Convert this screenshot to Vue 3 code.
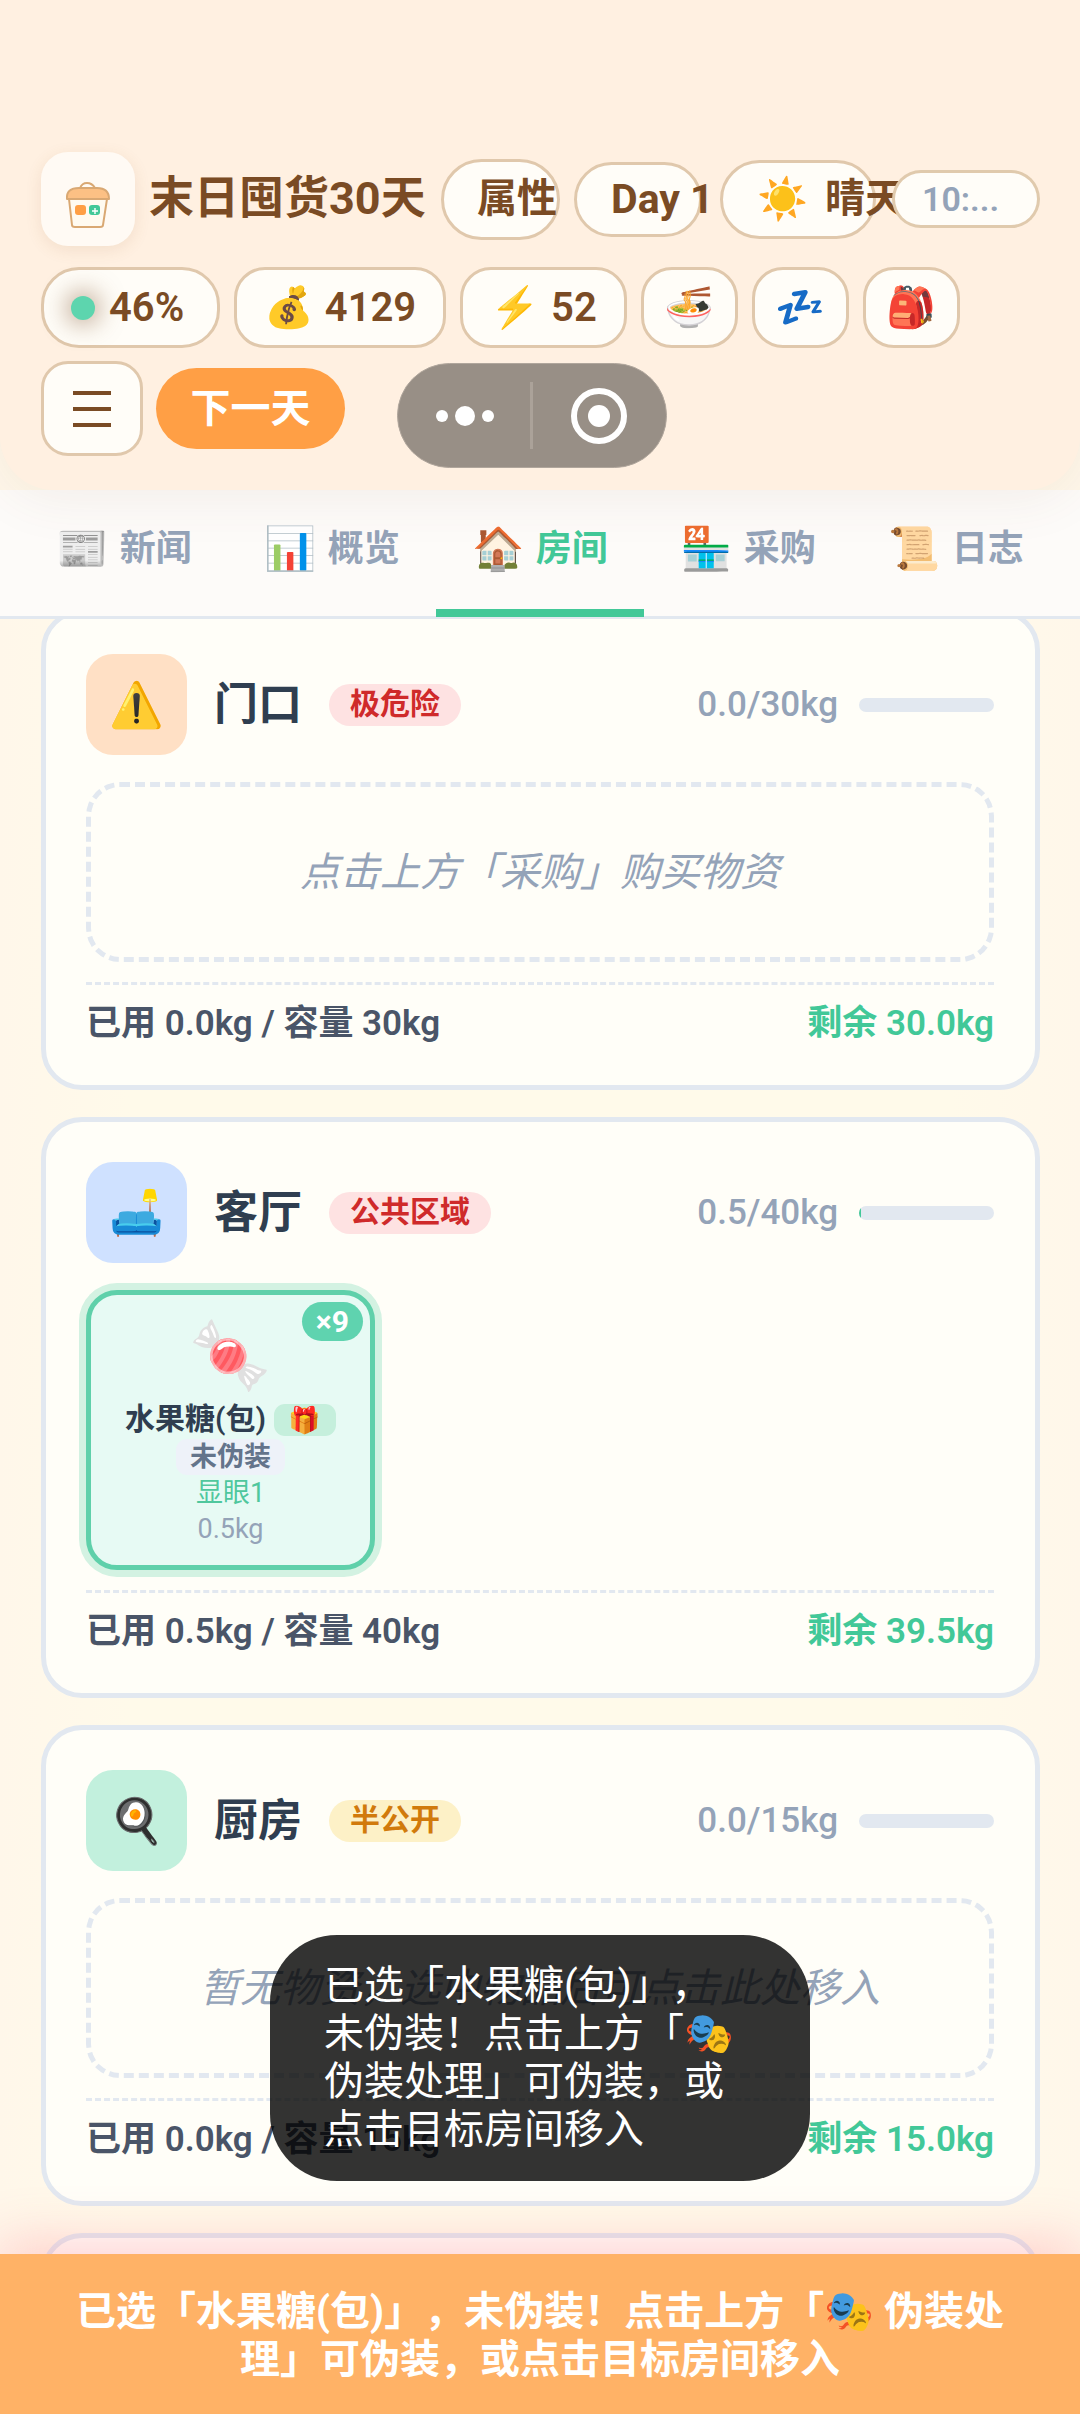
<script setup>
const stats = [
  { icon: '💰', value: '4129' },
  { icon: '⚡', value: '52' },
]
const actions = [
  { icon: '🍜', name: '吃饭' },
  { icon: '💤', name: '睡觉' },
  { icon: '🎒', name: '背包' },
]
const tabs = [
  { icon: '📰', label: '新闻' },
  { icon: '📊', label: '概览' },
  { icon: '🏠', label: '房间', active: true },
  { icon: '🏪', label: '采购' },
  { icon: '📜', label: '日志' },
]
const rooms = [
  { name: '门口', icon: '⚠️', tone: 'peach', tag: '极危险', tagTone: 'danger', used: 0, cap: 30, hint: '点击上方「采购」购买物资', items: [] },
  {
    name: '客厅', icon: '🛋️', tone: 'blue', tag: '公共区域', tagTone: 'danger', used: 0.5, cap: 40, hint: '',
    items: [{ icon: '🍬', name: '水果糖(包)', count: 9, badge: '🎁', state: '未伪装', notice: '显眼1', weight: '0.5kg' }],
  },
  { name: '厨房', icon: '🍳', tone: 'mint', tag: '半公开', tagTone: 'warn', used: 0, cap: 15, hint: '暂无物资，选中物品后可点击此处移入', items: [] },
]
</script>

<template>
  <div class="app">
    <header class="top">
      <div class="row brand">
        <span class="logo">
          <svg viewBox="0 0 94 94" aria-hidden="true">
            <path d="M28 47 L31 73 Q31 75 34 75 H59 Q62 75 62 73 L66 47 Z" fill="#fffaf0" stroke="#d9a873" stroke-width="2" />
            <path d="M39 36 Q41 31 46 31 Q51 31 54 36" fill="none" stroke="#d9a873" stroke-width="2" />
            <path d="M26 47 Q25 36 38 36 H56 Q68 36 68 47 Z" fill="#fcc084" stroke="#d9a873" stroke-width="2" stroke-linejoin="round" />
            <rect x="34" y="53" width="11" height="10" rx="3" fill="#ff9f45" />
            <rect x="48" y="53" width="11" height="10" rx="3" fill="#42c898" />
            <path d="M54 56 v6 M51 59 h6" stroke="#fff" stroke-width="1.4" />
          </svg>
        </span>
        <h1>末日囤货30天</h1>
        <button class="pill attr">属性</button>
        <span class="pill day">Day 1</span>
        <span class="pill weather"><span class="emoji">☀️</span>晴天</span>
        <span class="pill time">10:...</span>
      </div>
      <div class="row chips">
        <span class="chip mood"><i class="dot"></i>46%</span>
        <span v-for="s in stats" :key="s.icon" class="chip"><span class="emoji">{{ s.icon }}</span>{{ s.value }}</span>
        <button v-for="a in actions" :key="a.icon" class="chip action" :aria-label="a.name"><span class="emoji">{{ a.icon }}</span></button>
      </div>
      <div class="row controls">
        <button class="menu" aria-label="菜单"><i></i><i></i><i></i></button>
        <button class="next">下一天</button>
      </div>
      <div class="capsule">
        <button aria-label="更多">
          <svg width="60" height="22" viewBox="0 0 60 22"><circle cx="7" cy="11" r="6" /><circle cx="30" cy="11" r="10" /><circle cx="53" cy="11" r="6" /></svg>
        </button>
        <button aria-label="关闭">
          <svg width="58" height="58" viewBox="0 0 58 58"><circle class="ring" cx="29" cy="29" r="25" /><circle cx="29" cy="29" r="11" /></svg>
        </button>
      </div>
    </header>

    <nav class="tabs">
      <button v-for="t in tabs" :key="t.label" :class="{ active: t.active }"><span class="emoji">{{ t.icon }}</span>{{ t.label }}</button>
    </nav>

    <main class="rooms">
      <section v-for="r in rooms" :key="r.name" class="room">
        <div class="head">
          <span class="avatar" :class="r.tone">{{ r.icon }}</span>
          <h2>{{ r.name }}</h2>
          <span class="tag" :class="r.tagTone">{{ r.tag }}</span>
          <span class="load">{{ r.used.toFixed(1) }}/{{ r.cap }}kg</span>
          <span class="bar"><i :style="{ width: (r.used / r.cap) * 100 + '%' }"></i></span>
        </div>
        <div v-if="r.items.length" class="items">
          <button v-for="i in r.items" :key="i.name" class="item">
            <span class="count">×{{ i.count }}</span>
            <span class="pic">{{ i.icon }}</span>
            <span class="name">{{ i.name }} <span class="gift">{{ i.badge }}</span></span>
            <span class="state">{{ i.state }}</span>
            <span class="notice">{{ i.notice }}</span>
            <span class="weight">{{ i.weight }}</span>
          </button>
        </div>
        <div v-else class="empty">{{ r.hint }}</div>
        <div class="foot">
          <span>已用 {{ r.used.toFixed(1) }}kg / 容量 {{ r.cap }}kg</span>
          <span class="left">剩余 {{ (r.cap - r.used).toFixed(1) }}kg</span>
        </div>
      </section>
      <section class="room next-room"></section>
    </main>

    <div class="toast" role="status">已选「水果糖(包)」，未伪装！点击上方「🎭 伪装处理」可伪装，或点击目标房间移入</div>
    <div class="notice-bar">已选「水果糖(包)」，未伪装！点击上方「🎭 伪装处理」可伪装，或点击目标房间移入</div>
  </div>
</template>

<style>
body {
  overflow: hidden;
}
</style>

<style scoped>
.app {
  position: relative;
  height: 100vh;
  overflow: hidden;
  display: flex;
  flex-direction: column;
  background: linear-gradient(90deg, #fff7ea, #fffaea 12%, #fffaea 88%, #fff7ea);
  font-family: Roboto, "Noto Sans CJK SC", "Noto Color Emoji", sans-serif;
  font-size: 40px;
  line-height: 48px;
  color: #4a5568;
  text-spacing-trim: space-all;
}
.app * {
  box-sizing: border-box;
}
button {
  font: inherit;
  color: inherit;
  background: none;
  border: 0;
  padding: 0;
  margin: 0;
}
h1, h2 {
  margin: 0;
  font-size: 44px;
  font-weight: 700;
  white-space: nowrap;
}
i {
  display: block;
}
svg {
  display: block;
}
.top {
  position: relative;
  z-index: 2;
  flex: none;
  padding: 152px 40px 34px 41px;
  background: #fff0e1;
  border-radius: 0 0 54px 54px;
  box-shadow: 0 8px 54px rgba(120, 80, 50, 0.08);
  color: #7a4b24;
}
.row {
  display: flex;
  align-items: center;
}
.brand {
  gap: 14px;
  height: 94px;
  margin-bottom: 21px;
}
.logo {
  flex: none;
  width: 94px;
  height: 94px;
  border-radius: 27px;
  background: #fffaf4;
  box-shadow: 0 4px 16px rgba(160, 100, 50, 0.12);
}
.brand h1 {
  flex: none;
  width: 278px;
  font-size: 45px;
}
.pill {
  display: flex;
  align-items: center;
  flex: none;
  border: 3px solid #e0c8ac;
  border-radius: 41px;
  background: #fffdf8;
  white-space: nowrap;
}
.attr {
  width: 119px;
  height: 81px;
  padding-left: 33px;
  font-weight: 600;
}
.day {
  width: 128px;
  height: 75px;
  padding-left: 34px;
  font-size: 41px;
  font-weight: 700;
}
.weather {
  width: 156px;
  height: 79px;
  margin-left: 4px;
  padding-left: 34px;
  gap: 17px;
  font-weight: 600;
}
.weather .emoji {
  font-size: 41px;
}
.time {
  position: relative;
  flex: 1;
  height: 58px;
  margin-left: 2px;
  padding-left: 27px;
  border-color: rgba(214, 184, 148, 0.75);
  font-size: 34px;
  font-weight: 600;
  color: #94a3b8;
}
.chips {
  gap: 14px;
  margin-bottom: 13px;
}
.chip {
  display: flex;
  align-items: center;
  gap: 11px;
  height: 81px;
  padding: 0 27px;
  border: 3px solid #e0c8ac;
  border-radius: 31px;
  background: #fffdf8;
  font-weight: 600;
}
.action {
  justify-content: center;
  width: 97px;
  padding: 0;
}
.mood {
  gap: 14px;
  min-width: 179px;
  border-radius: 38px;
}
.dot {
  width: 24px;
  height: 24px;
  border-radius: 50%;
  background: #5dd5ae;
  box-shadow: 0 0 24px 4px rgba(122, 75, 36, 0.5);
}
.controls {
  gap: 13px;
}
.menu {
  display: flex;
  flex-direction: column;
  align-items: center;
  justify-content: center;
  gap: 12px;
  width: 102px;
  height: 95px;
  border: 3px solid #e0c8ac;
  border-radius: 27px;
  background: #fffdf8;
}
.menu i {
  width: 38px;
  height: 4px;
  background: #7a4b24;
}
.next {
  width: 189px;
  height: 81px;
  border-radius: 41px;
  background: #ff9f45;
  color: #fff;
  font-weight: 700;
}
.capsule {
  position: absolute;
  left: 50%;
  bottom: 22px;
  display: flex;
  width: 270px;
  height: 105px;
  margin-left: -143px;
  border: 1px solid #b0a69c;
  border-radius: 53px;
  background: #988f86;
}
.capsule button {
  position: relative;
  flex: 1;
  display: flex;
  align-items: center;
  justify-content: center;
}
.capsule button + button::before {
  content: "";
  position: absolute;
  left: -2px;
  top: 18px;
  bottom: 18px;
  width: 3px;
  background: #aba299;
}
.capsule svg {
  fill: #fff;
}
.capsule .ring {
  fill: none;
  stroke: #fff;
  stroke-width: 6px;
}
.tabs {
  position: relative;
  z-index: 1;
  flex: none;
  display: flex;
  height: 129px;
  padding: 0 20px;
  border-bottom: 3px solid #e2e8f0;
  background: #fdfbf9;
}
.tabs button {
  position: relative;
  flex: 1;
  display: flex;
  align-items: center;
  justify-content: center;
  gap: 11px;
  padding-bottom: 8px;
  font-size: 36px;
  font-weight: 600;
  color: #94a3b8;
}
.tabs .emoji {
  font-size: 42px;
}
.tabs .active {
  color: #42c898;
}
.tabs .active::after {
  content: "";
  position: absolute;
  left: 0;
  right: 0;
  bottom: -1px;
  height: 8px;
  background: #42c898;
}
.rooms {
  flex: 1;
  min-height: 0;
  display: flex;
  flex-direction: column;
  gap: 27px;
  margin-top: -10px;
  padding: 0 40px 0 41px;
}
.room {
  flex: none;
  padding: 40px 41px 37px 40px;
  border: 5px solid #e2e8f0;
  border-radius: 41px;
  background: #fffef8;
}
.next-room {
  height: 200px;
}
.head {
  display: flex;
  align-items: center;
  gap: 27px;
  margin-bottom: 27px;
}
.avatar {
  display: flex;
  align-items: center;
  justify-content: center;
  width: 101px;
  height: 101px;
  border-radius: 27px;
  font-size: 44px;
}
.peach { background: #ffe0c5; }
.blue { background: #cfe1ff; }
.mint { background: #c2f0dd; }
h2 {
  color: #2f3e50;
}
.tag {
  height: 42px;
  padding: 0 21px;
  border-radius: 21px;
  font-size: 30px;
  line-height: 40px;
  font-weight: 600;
}
.danger { background: #fee2e2; color: #cf2a2a; }
.warn { background: #fdf1c7; color: #d17a0c; }
.load {
  margin-left: auto;
  margin-right: -6px;
  font-size: 35px;
  font-weight: 500;
  color: #94a3b8;
}
.bar {
  width: 135px;
  height: 14px;
  border-radius: 7px;
  overflow: hidden;
  background: #e2e8f0;
}
.bar i {
  height: 100%;
  background: #42c898;
}
.empty {
  display: flex;
  align-items: center;
  justify-content: center;
  height: 180px;
  padding-top: 2px;
  border: 5px dashed #e2e8f0;
  border-radius: 34px;
  font-style: italic;
  color: #94a3b8;
}
.items {
  display: flex;
}
.item {
  position: relative;
  display: flex;
  flex-direction: column;
  align-items: center;
  width: 289px;
  height: 280px;
  padding-top: 18px;
  border: 5px solid #5fd0aa;
  border-radius: 31px;
  background: #e7faf4;
  box-shadow: 0 0 0 7px #d3f2e2;
  font-size: 27px;
  line-height: 36px;
}
.count {
  position: absolute;
  top: 7px;
  right: 7px;
  height: 39px;
  padding: 0 14px;
  border-radius: 20px;
  background: #5fd3af;
  color: #fff;
  font-size: 30px;
  line-height: 39px;
  font-weight: 700;
}
.pic {
  font-size: 66px;
  line-height: 86px;
}
.name {
  font-size: 30px;
  line-height: 40px;
  font-weight: 600;
  color: #2f3e50;
}
.gift {
  display: inline-block;
  height: 32px;
  padding: 0 15px;
  border-radius: 11px;
  background: #c5efdc;
  font-size: 26px;
  line-height: 32px;
}
.state {
  padding: 0 14px;
  border-radius: 11px;
  background: #eef2f9;
  font-weight: 600;
  color: #64748b;
}
.notice { color: #4fc79d; }
.weight { color: #94a3b8; }
.foot {
  display: flex;
  justify-content: space-between;
  margin-top: 20px;
  padding-top: 15px;
  border-top: 3px dashed #e2e8f0;
  font-size: 35px;
  font-weight: 600;
}
.left {
  color: #42c898;
}
.toast {
  position: absolute;
  z-index: 4;
  left: 25%;
  right: 25%;
  bottom: 233px;
  padding: 27px 60px 27px 54px;
  border-radius: 67px;
  background: rgba(0, 0, 0, 0.8);
  color: #fff;
}
.notice-bar {
  position: absolute;
  z-index: 3;
  left: 0;
  right: 0;
  bottom: 0;
  padding: 34px 60px 30px;
  background: #ffb266;
  box-shadow: 0 -11px 54px rgba(255, 107, 129, 0.3);
  color: #fff;
  font-weight: 700;
  text-align: center;
}
</style>
